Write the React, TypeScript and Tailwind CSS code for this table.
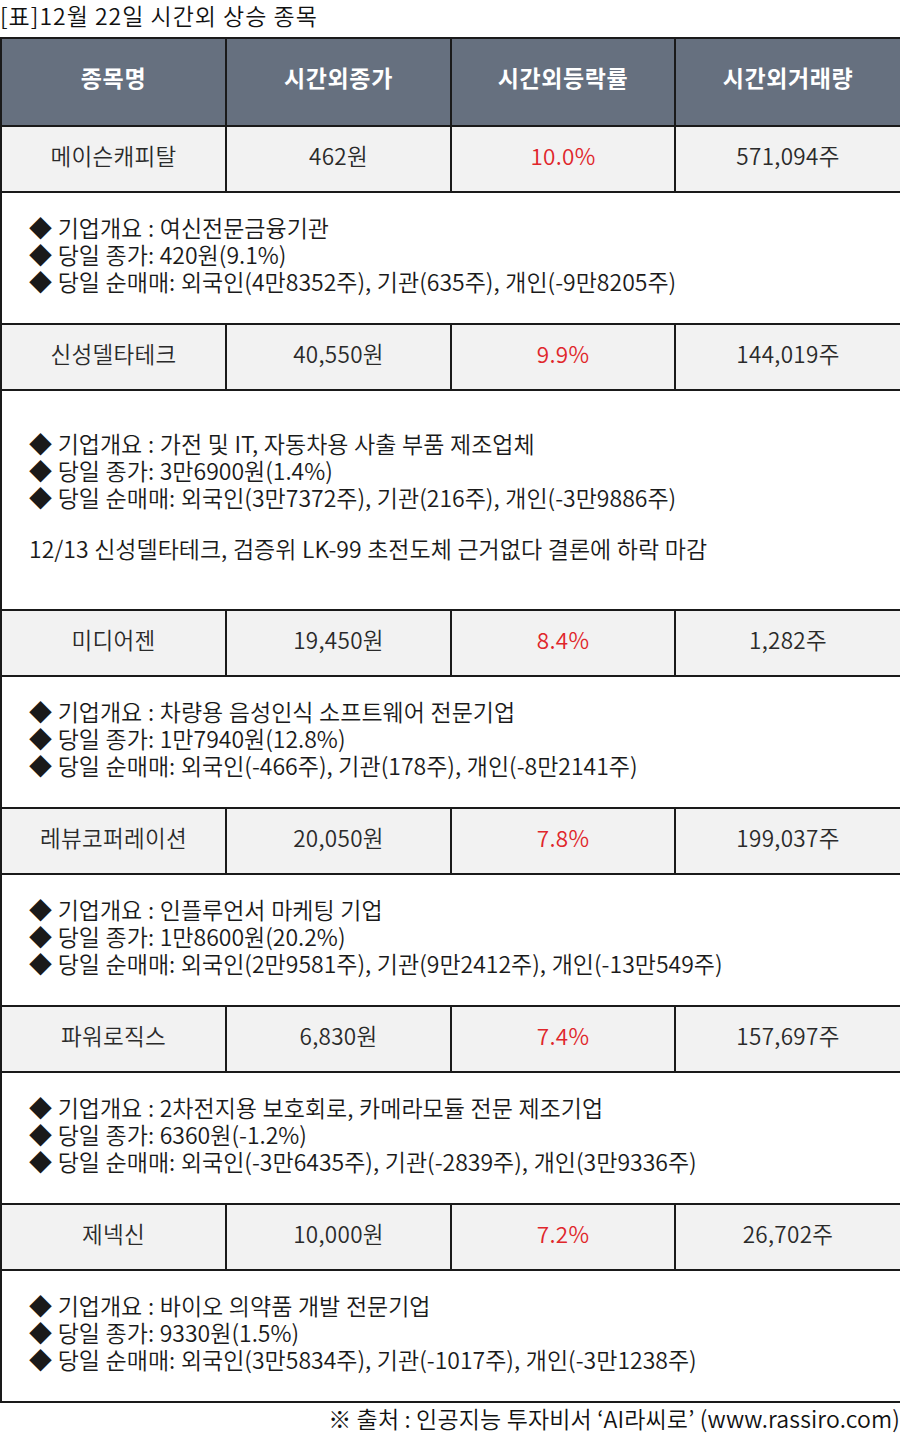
type Stock = {
  name: string;
  close: string;
  rate: string;
  volume: string;
  details: string[];
  extra?: string;
};

const stocks: Stock[] = [
  {
    name: "메이슨캐피탈",
    close: "462원",
    rate: "10.0%",
    volume: "571,094주",
    details: [
      "기업개요 : 여신전문금융기관",
      "당일 종가: 420원(9.1%)",
      "당일 순매매: 외국인(4만8352주), 기관(635주), 개인(-9만8205주)",
    ],
  },
  {
    name: "신성델타테크",
    close: "40,550원",
    rate: "9.9%",
    volume: "144,019주",
    details: [
      "기업개요 : 가전 및 IT, 자동차용 사출 부품 제조업체",
      "당일 종가: 3만6900원(1.4%)",
      "당일 순매매: 외국인(3만7372주), 기관(216주), 개인(-3만9886주)",
    ],
    extra: "12/13 신성델타테크, 검증위 LK-99 초전도체 근거없다 결론에 하락 마감",
  },
  {
    name: "미디어젠",
    close: "19,450원",
    rate: "8.4%",
    volume: "1,282주",
    details: [
      "기업개요 : 차량용 음성인식 소프트웨어 전문기업",
      "당일 종가: 1만7940원(12.8%)",
      "당일 순매매: 외국인(-466주), 기관(178주), 개인(-8만2141주)",
    ],
  },
  {
    name: "레뷰코퍼레이션",
    close: "20,050원",
    rate: "7.8%",
    volume: "199,037주",
    details: [
      "기업개요 : 인플루언서 마케팅 기업",
      "당일 종가: 1만8600원(20.2%)",
      "당일 순매매: 외국인(2만9581주), 기관(9만2412주), 개인(-13만549주)",
    ],
  },
  {
    name: "파워로직스",
    close: "6,830원",
    rate: "7.4%",
    volume: "157,697주",
    details: [
      "기업개요 : 2차전지용 보호회로, 카메라모듈 전문 제조기업",
      "당일 종가: 6360원(-1.2%)",
      "당일 순매매: 외국인(-3만6435주), 기관(-2839주), 개인(3만9336주)",
    ],
  },
  {
    name: "제넥신",
    close: "10,000원",
    rate: "7.2%",
    volume: "26,702주",
    details: [
      "기업개요 : 바이오 의약품 개발 전문기업",
      "당일 종가: 9330원(1.5%)",
      "당일 순매매: 외국인(3만5834주), 기관(-1017주), 개인(-3만1238주)",
    ],
  },
];

const headers = ["종목명", "시간외종가", "시간외등락률", "시간외거래량"];

export default function App() {
  return (
    <div
      className="w-[900px] bg-white text-[#2a2a2a] font-[350]"
      style={{ fontFamily: '"Noto Sans CJK KR", "Noto Sans", sans-serif' }}
    >
      <div className="h-[37px] text-[23px] leading-[30px] text-[#111111] tracking-[1px]">
        [표]12월 22일 시간외 상승 종목
      </div>

      <table className="w-[900px] table-fixed border-collapse border border-[#1a1a1a]">
        <colgroup>
          <col className="w-[225px]" />
          <col className="w-[225px]" />
          <col className="w-[224px]" />
          <col className="w-[226px]" />
        </colgroup>
        <thead>
          <tr className="h-[88px] bg-[#66707f]">
            {headers.map((h) => (
              <th
                key={h}
                className="border-2 border-[#1a1a1a] pb-[9px] text-center text-[23px] font-bold text-white tracking-[0.6px]"
              >
                {h}
              </th>
            ))}
          </tr>
        </thead>
        <tbody>
          {stocks.map((s) => (
            <>
              <tr key={s.name} className="h-[66px] bg-[#f2f2f2] text-[22.5px] tracking-[0.3px]">
                <td className="border-2 border-[#1a1a1a] pb-[6px] text-center">{s.name}</td>
                <td className="border-2 border-[#1a1a1a] pb-[6px] text-center">{s.close}</td>
                <td className="border-2 border-[#1a1a1a] pb-[6px] text-center text-[#e0262b]">{s.rate}</td>
                <td className="border-2 border-[#1a1a1a] pb-[6px] text-center">{s.volume}</td>
              </tr>
              <tr key={s.name + "-d"} className={s.extra ? "h-[220px]" : "h-[132px]"}>
                <td
                  colSpan={4}
                  className="border-2 border-[#1a1a1a] pb-[8px] pl-[27px] text-[23px] leading-[27px] text-[#1a1a1a] [word-spacing:0.5px]"
                >
                  {s.details.map((d) => (
                    <div key={d}>◆ {d}</div>
                  ))}
                  {s.extra && <div className="mt-[24px]">{s.extra}</div>}
                </td>
              </tr>
            </>
          ))}
        </tbody>
      </table>

      <div className="text-right text-[23px] leading-[30px] text-[#111111] tracking-[0.15px]">
        ※ 출처 : 인공지능 투자비서 ‘AI라씨로’ (www.rassiro.com)
      </div>
    </div>
  );
}
